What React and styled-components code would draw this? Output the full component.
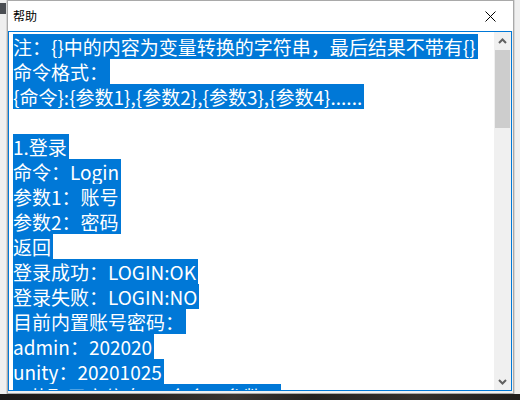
import React from "react";
import styled, { createGlobalStyle } from "styled-components";

const Global = createGlobalStyle`
  html, body { margin: 0; padding: 0; background: #f0f0f0; }
  body { font-family: "Noto Sans CJK SC", sans-serif; }
`;

const Desktop = styled.div`
  width: 520px;
  height: 400px;
  display: flex;
  flex-direction: column;
  overflow: hidden;
  background: #eeeeee;
`;

const Row = styled.div`
  display: flex;
  flex: 0 0 394px;
`;

const SideStrip = styled.div`
  flex: 0 0 ${(p) => p.$w}px;
  background: #efefef;
  border-${(p) => p.$side}: 1px solid #d6d6d6;
  box-sizing: border-box;
  display: flex;
  flex-direction: column;
`;

const DarkBit = styled.div`
  margin-top: 3px;
  width: 6px;
  height: 11px;
  background: #4a4d52;
`;

const Window = styled.div`
  flex: 0 0 507px;
  box-sizing: border-box;
  border: 1px solid #a9a9a9;
  background: #f0f0f0;
  display: flex;
  flex-direction: column;
  padding: 0 1px 2px 0;
`;

const TitleBar = styled.div`
  height: 30px;
  flex: 0 0 30px;
  background: #ffffff;
  margin-right: -1px;
  display: flex;
  align-items: center;
  justify-content: space-between;
`;

const Title = styled.span`
  padding-left: 5px;
  font-family: "Noto Sans CJK SC", sans-serif;
  font-size: 12px;
  color: #000;
  line-height: 30px;
`;

const CloseButton = styled.div`
  width: 46px;
  height: 30px;
  display: flex;
  align-items: center;
  justify-content: center;
`;

const EditBox = styled.div`
  flex: 0 0 360px;
  box-sizing: border-box;
  border: 1px solid #0078d7;
  background: #ffffff;
  display: flex;
  overflow: hidden;
`;

const Content = styled.div`
  flex: 1;
  padding: 1px 0 0 4px;
  overflow: hidden;
  font-family: "Noto Sans CJK SC", sans-serif;
  font-size: 19px;
`;

const Line = styled.div`
  height: 25px;
  white-space: pre;
`;

const Sel = styled.span`
  display: inline-block;
  height: 25px;
  line-height: 25px;
  background: #0078d7;
  color: #ffffff;
  padding-right: 2px;
`;

const ScrollBar = styled.div`
  flex: 0 0 17px;
  background: #f0f0f0;
  display: flex;
  flex-direction: column;
`;

const ArrowButton = styled.div`
  flex: 0 0 17px;
  display: flex;
  align-items: center;
  justify-content: center;
`;

const Track = styled.div`
  flex: 1;
  display: flex;
  flex-direction: column;
  padding: 1px 1px 0 1px;
`;

const Thumb = styled.div`
  height: 78px;
  background: #cdcdcd;
`;

const BottomStrip = styled.div`
  flex: 1;
  background: linear-gradient(90deg, #1c1a19 0%, #2a2623 30%, #3a3531 45%, #242120 60%, #33302c 80%, #1f1d1c 100%);
`;

const lines = [
  "注：{}中的内容为变量转换的字符串，最后结果不带有{}",
  "命令格式：",
  "{命令}:{参数1},{参数2},{参数3},{参数4}......",
  "",
  "1.登录",
  "命令：Login",
  "参数1：账号",
  "参数2：密码",
  "返回",
  "登录成功：LOGIN:OK",
  "登录失败：LOGIN:NO",
  "目前内置账号密码：",
  "admin：202020",
  "unity：20201025",
  "2.获取用户信息：{命令}:{参数1}",
];

const Chevron = ({ up }) => (
  <svg width="9" height="6" viewBox="0 0 9 6">
    <polyline
      points={up ? "1,5 4.5,1.5 8,5" : "1,1 4.5,4.5 8,1"}
      fill="none"
      stroke="#606060"
      strokeWidth="2"
    />
  </svg>
);

export default function App() {
  return (
    <>
      <Global />
      <Desktop>
        <Row>
          <SideStrip $w={7} $side="right">
            <DarkBit />
          </SideStrip>
          <Window>
            <TitleBar>
              <Title>帮助</Title>
              <CloseButton>
                <svg width="11" height="11" viewBox="0 0 11 11">
                  <path d="M0.5 0.5 L10.5 10.5 M10.5 0.5 L0.5 10.5" stroke="#000" strokeWidth="1" />
                </svg>
              </CloseButton>
            </TitleBar>
            <EditBox>
              <Content>
                {lines.map((t, i) => (
                  <Line key={i}>{t ? <Sel>{t}</Sel> : null}</Line>
                ))}
              </Content>
              <ScrollBar>
                <ArrowButton>
                  <Chevron up />
                </ArrowButton>
                <Track>
                  <Thumb />
                </Track>
                <ArrowButton>
                  <Chevron />
                </ArrowButton>
              </ScrollBar>
            </EditBox>
          </Window>
          <SideStrip $w={6} $side="left" />
        </Row>
        <BottomStrip />
      </Desktop>
    </>
  );
}
